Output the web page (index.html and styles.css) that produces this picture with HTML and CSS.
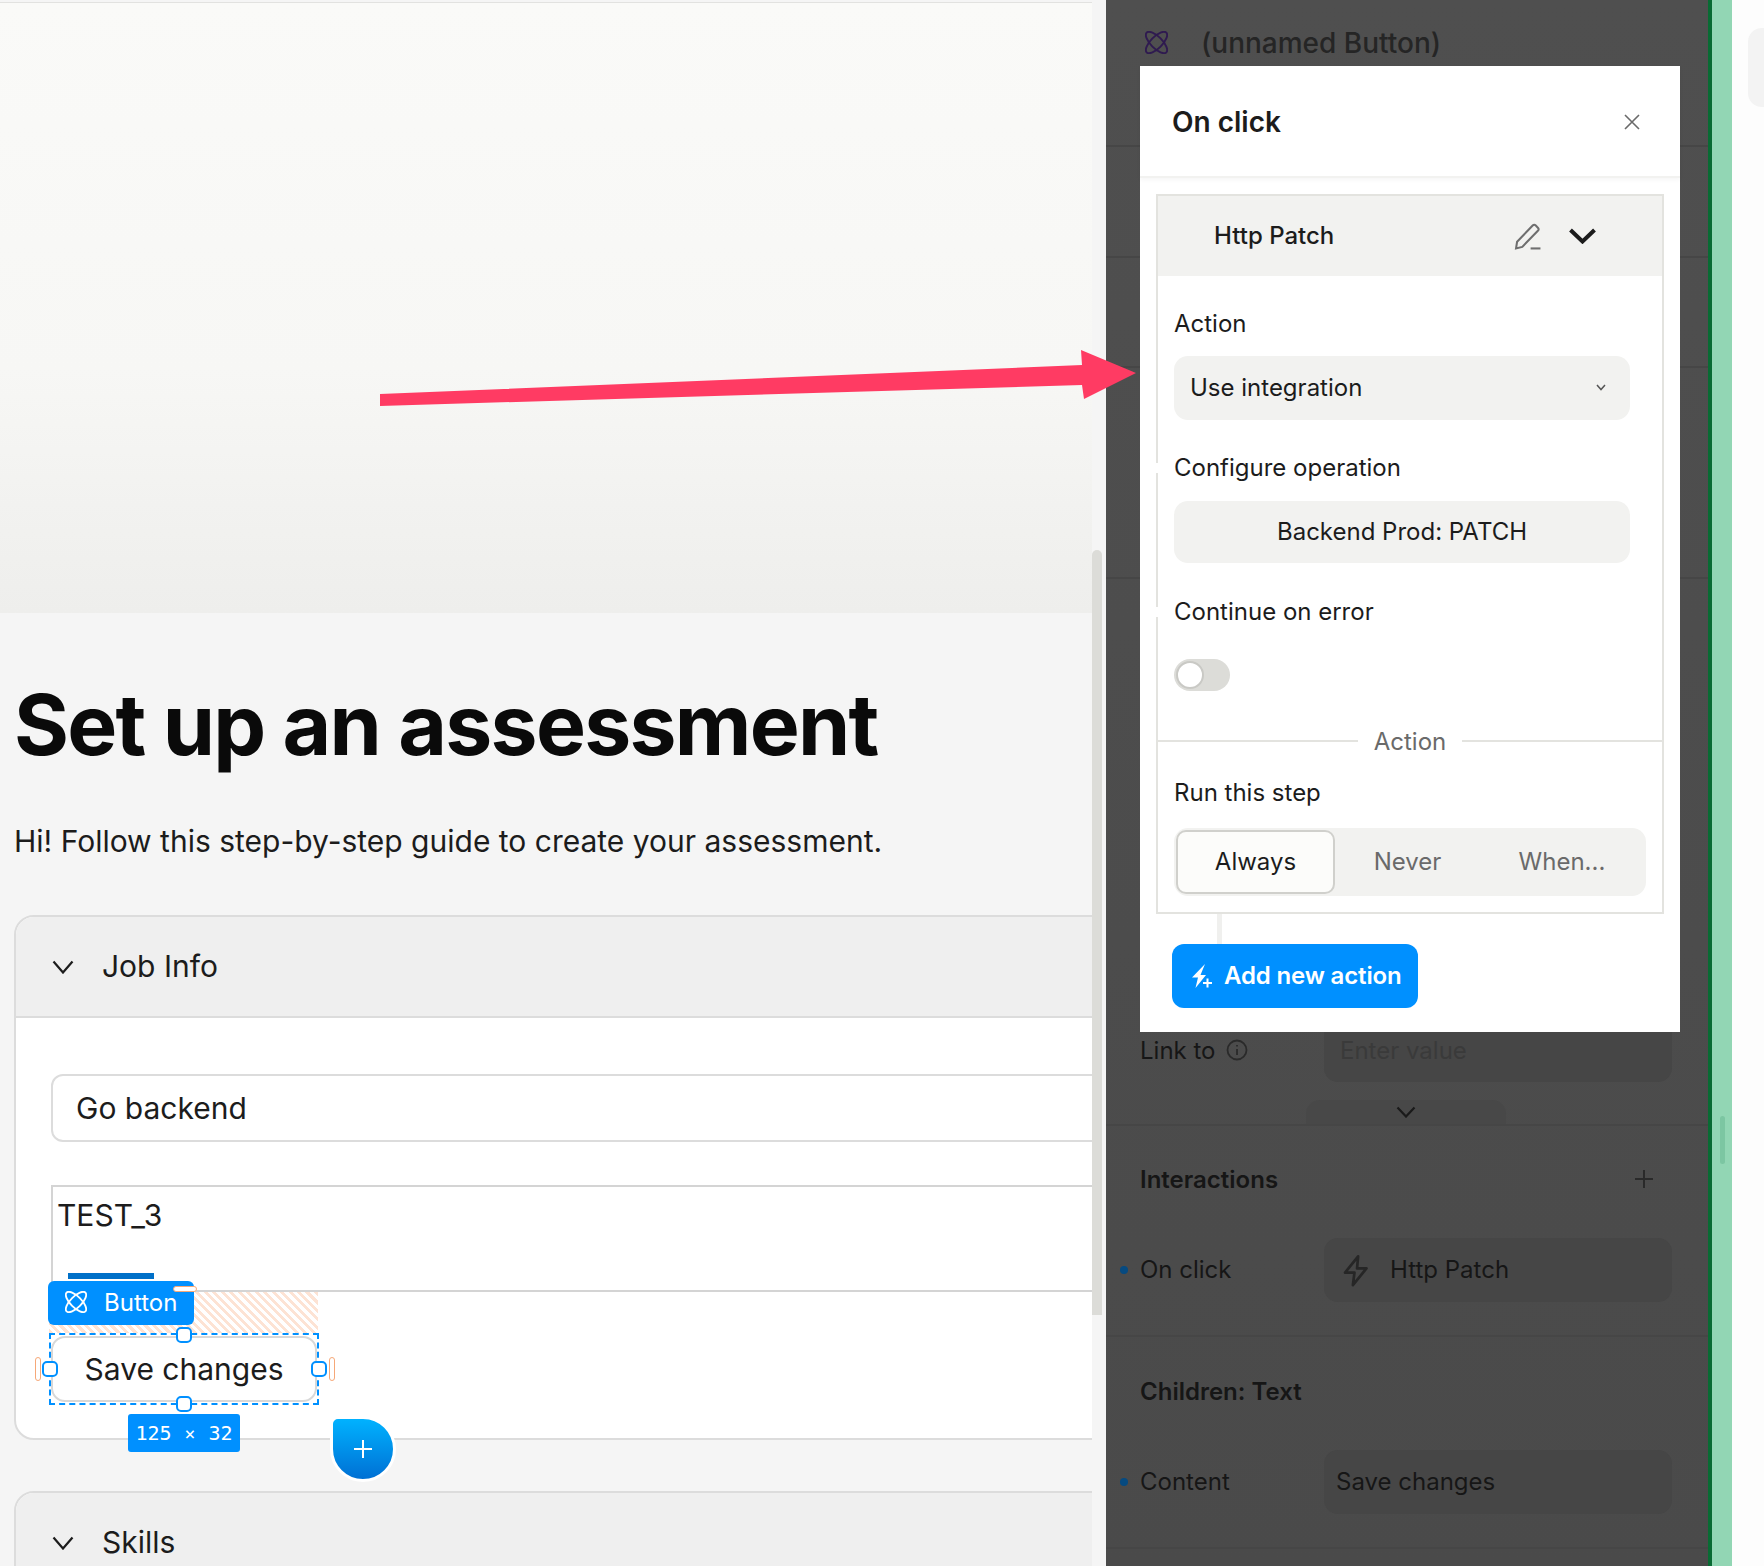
FILE: index.html
```html
<!DOCTYPE html>
<html lang="en">
<head>
<meta charset="utf-8">
<title>Set up an assessment</title>
<link rel="stylesheet" href="styles.css">
</head>
<body>
<div class="app">
  <main class="main">
    <div class="scroller">
      <div class="hero"></div>
      <h1 class="title">Set up an assessment</h1>
      <p class="subtitle">Hi! Follow this step-by-step guide to create your assessment.</p>

      <section class="card card-job">
        <header class="card-head">
          <svg class="chev" viewBox="0 0 22 14"><path d="M1.500 1.500 11 12.500 20.500 1.500"/></svg>
          <span>Job Info</span>
        </header>
        <div class="card-body">
          <div class="input">Go backend</div>
          <div class="textarea">TEST_3</div>
          <div class="selection">
            <div class="save-btn">Save changes</div>
            <div class="hatch"></div>
            <div class="blue-bar"></div>
            <div class="sel-label">
              <svg class="atom" viewBox="0 0 24 24"><ellipse cx="12" cy="12" rx="6" ry="14.500" transform="rotate(45 12 12)"/><ellipse cx="12" cy="12" rx="6" ry="14.500" transform="rotate(-45 12 12)"/></svg>
              <span>Button</span>
            </div>
            <div class="dashed"></div>
            <i class="pill pill-top"></i>
            <i class="pill pill-bottom"></i>
            <i class="pill pill-left"></i>
            <i class="pill pill-right"></i>
            <i class="handle h-top"></i>
            <i class="handle h-bottom"></i>
            <i class="handle h-left"></i>
            <i class="handle h-right"></i>
            <div class="size-tag"><span>125</span><span class="times">×</span><span>32</span></div>
            <div class="drop">
              <svg viewBox="0 0 20 20"><path d="M10 1v18M1 10h18"/></svg>
            </div>
          </div>
        </div>
      </section>

      <section class="card card-skills">
        <header class="card-head">
          <svg class="chev" viewBox="0 0 22 14"><path d="M1.500 1.500 11 12.500 20.500 1.500"/></svg>
          <span>Skills</span>
        </header>
      </section>
    </div>
    <div class="gutter"><div class="thumb"></div></div>
  </main>

  <aside class="panel">
    <div class="pane pane-name">
      <svg class="atom atom-dark" viewBox="0 0 24 24"><ellipse cx="12" cy="12" rx="6" ry="14.500" transform="rotate(45 12 12)"/><ellipse cx="12" cy="12" rx="6" ry="14.500" transform="rotate(-45 12 12)"/></svg>
      <span>(unnamed Button)</span>
    </div>
    <div class="pane pane-a"></div>
    <div class="pane pane-b"></div>
    <div class="pane pane-c"></div>
    <div class="pane pane-link">
      <div class="row">
        <span class="no-dot"></span>
        <span class="row-label">Link to
          <svg class="info" viewBox="0 0 22 22"><circle cx="11" cy="11" r="9.500"/><path d="M11 10v6M11 6v1.600"/></svg>
        </span>
        <div class="field placeholder">Enter value</div>
      </div>
      <div class="more-tab">
        <svg viewBox="0 0 20 12"><path d="M1.500 1.500 10 10.500 18.500 1.500"/></svg>
      </div>
    </div>
    <div class="pane pane-list pane-first">
      <div class="pane-title">
        <span>Interactions</span>
        <svg class="plus" viewBox="0 0 20 20"><path d="M10 1v18M1 10h18"/></svg>
      </div>
      <div class="row">
        <span class="dot"></span>
        <span class="row-label">On click</span>
        <div class="field field-icon">
          <svg class="bolt" viewBox="0 0 24 30"><path d="M14.500 1.500 2 17h9l-1.500 12L22.500 13h-9z"/></svg>
          <span>Http Patch</span>
        </div>
      </div>
    </div>
    <div class="pane pane-list">
      <div class="pane-title"><span>Children: Text</span></div>
      <div class="row">
        <span class="dot"></span>
        <span class="row-label">Content</span>
        <div class="field">Save changes</div>
      </div>
    </div>
    <div class="pane pane-end"></div>

    <div class="modal">
      <header class="modal-head">
        <h2>On click</h2>
        <svg class="close" viewBox="0 0 16 16"><path d="M1 1l14 14M15 1 1 15"/></svg>
      </header>
      <div class="step">
        <div class="step-head">
          <span class="step-name">Http Patch</span>
          <svg class="pen" viewBox="0 0 26 26"><path d="M1.500 24.500 2.500 18 17.500 2.500q1.500-1.500 3 0l2 2q1.500 1.500 0 3L7.500 23z"/><path d="M15.500 24.500H25"/></svg>
          <svg class="step-chev" viewBox="0 0 28 16"><path d="M2 2 14 13.500 26 2"/></svg>
        </div>
        <div class="step-body">
          <label class="lab lab-first">Action</label>
          <div class="select"><span>Use integration</span>
            <svg viewBox="0 0 10 7"><path d="M1 1l4 4.500L9 1"/></svg>
          </div>
          <label class="lab lab-notch lab-config">Configure operation</label>
          <div class="op-btn">Backend Prod: PATCH</div>
          <label class="lab lab-notch lab-continue">Continue on error</label>
          <div class="toggle"><i></i></div>
          <div class="divider"><span>Action</span></div>
          <label class="lab lab-run">Run this step</label>
          <div class="segment">
            <span class="seg seg-on">Always</span>
            <span class="seg seg-never">Never</span>
            <span class="seg seg-when">When...</span>
          </div>
        </div>
      </div>
      <div class="connector"></div>
      <div class="add-btn">
        <svg viewBox="0 0 20 24"><path class="add-bolt" d="M13 0 0 13.500h6L3.500 24 14 11H8.500z"/><path class="add-plus" d="M15.500 14.500v9M11 19h9"/></svg>
        <span>Add new action</span>
      </div>
    </div>
  </aside>

  <div class="green"><div class="green-thumb"></div></div>
  <div class="far"><div class="far-box"></div></div>
</div>

<svg class="arrow" viewBox="0 0 756 56"><path d="M0 44 702 15 701 0 756 23 704 49 702 35 0 56z"/></svg>
</body>
</html>
```
FILE: styles.css
```css
* { box-sizing: border-box; }
html, body { margin: 0; padding: 0; }
body {
  width: 1764px;
  height: 1566px;
  overflow: hidden;
  font-family: Inter, "Liberation Sans", sans-serif;
  color: #1c1c1c;
  background: #f5f5f5;
  position: relative;
}
.app { display: flex; width: 1764px; height: 1566px; }

/* left canvas */
.main { display: flex; width: 1106px; height: 1566px; flex: none; background: #f5f5f5; }
.scroller { width: 1092px; height: 1566px; overflow: hidden; flex: none; }
.gutter { width: 14px; padding: 550px 4px 0 0; flex: none; }
.thumb { width: 10px; height: 765px; background: #dcdcd8; border-radius: 5px 5px 0 0; }
.hero {
  margin-top: 2px;
  height: 611px;
  border-top: 1px solid #e2e2e0;
  background: linear-gradient(#fafaf8 0%, #f7f7f5 60%, #eeeeec 100%);
}
.title {
  margin: 62px 0 0 14px;
  font-size: 84px;
  line-height: 100px;
  font-weight: 700;
  letter-spacing: -1.750px;
  color: #0a0a0a;
  white-space: nowrap;
}
.subtitle {
  margin: 46px 0 0 14px;
  font-size: 30px;
  line-height: 40px;
  white-space: nowrap;
}
.card {
  width: 1200px;
  margin-left: 14px;
  border: 2px solid #dcdcdc;
  border-radius: 20px;
  background: #fff;
}
.card-job { margin-top: 54px; height: 525px; }
.card-skills { margin-top: 51px; }
.card-head {
  display: flex;
  align-items: center;
  height: 101px;
  padding: 0 0 2px 36px;
  background: #efefef;
  border-bottom: 2px solid #dcdcdc;
  border-radius: 18px 18px 0 0;
  font-size: 30px;
}
.chev { width: 22px; height: 14px; margin: 2px 28px 0 0; fill: none; stroke: #1c1c1c; stroke-width: 2.200; }
.card-body { padding: 56px 35px 0; }
.input {
  height: 68px;
  padding-left: 23px;
  border: 2px solid #dcdcdc;
  border-radius: 12px;
  font-size: 30px;
  line-height: 64px;
}
.textarea {
  height: 107px;
  margin-top: 43px;
  padding: 8px 0 0 4px;
  border: 2px solid #d4d4d4;
  font-size: 30px;
  line-height: 40px;
}

/* selected button, with its editor overlays */
.selection { position: relative; width: 266px; height: 66px; margin-top: 44px; }
.save-btn {
  height: 66px;
  border: 2px solid #d8d8d8;
  border-radius: 14px;
  background: #fff;
  font-size: 30px;
  line-height: 62px;
  text-align: center;
}
.hatch {
  position: absolute;
  left: -2px;
  top: -44px;
  width: 269px;
  height: 41px;
  background: repeating-linear-gradient(45deg, #fde3d4 0 3px, #fff 3px 6px);
}
.blue-bar { position: absolute; left: 17px; top: -63px; width: 86px; height: 6px; background: #0070c8; }
.sel-label {
  position: absolute;
  left: -3px;
  top: -55px;
  display: flex;
  align-items: center;
  width: 146px;
  height: 44px;
  padding: 0 0 2px 17px;
  border-radius: 6px;
  background: #0090ff;
  color: #fff;
  font-size: 24px;
}
.atom { width: 22px; height: 22px; margin-right: 17px; fill: none; stroke: #fff; stroke-width: 2; flex: none; }
.dashed { position: absolute; left: -2px; top: -3px; width: 270px; height: 72px; border: 2px dashed #0090ff; }
.pill { position: absolute; background: #fff; border: 1.500px solid #f6a878; border-radius: 3px; }
.pill-top { left: 122px; top: -50px; width: 24px; height: 6px; }
.pill-bottom { left: 122px; top: 78px; width: 24px; height: 6px; }
.pill-left { left: -16px; top: 21px; width: 6px; height: 24px; }
.pill-right { left: 278px; top: 21px; width: 6px; height: 24px; }
.handle {
  position: absolute;
  width: 16px;
  height: 16px;
  background: #fff;
  border: 2px solid #0090ff;
  border-radius: 5px;
}
.h-top { left: 125px; top: -9px; }
.h-bottom { left: 125px; top: 60px; }
.h-left { left: -9px; top: 25px; }
.h-right { left: 260px; top: 25px; }
.size-tag {
  position: absolute;
  left: 77px;
  top: 78px;
  display: flex;
  justify-content: center;
  align-items: center;
  gap: 13px;
  width: 112px;
  height: 38px;
  border-radius: 3px;
  background: #0090ff;
  color: #fff;
  font-family: "DejaVu Sans Mono", monospace;
  font-size: 20px;
}
.size-tag .times { font-size: 18px; }
.drop {
  position: absolute;
  left: 279px;
  top: 80px;
  display: flex;
  align-items: center;
  justify-content: center;
  width: 66px;
  height: 66px;
  border: 3px solid #fff;
  border-radius: 8px 50% 50% 50%;
  background: linear-gradient(#00b2ff, #0070d4);
}
.drop svg { width: 20px; height: 20px; fill: none; stroke: #fff; stroke-width: 2; }

/* right property panel, dimmed */
.panel {
  position: relative;
  width: 602px;
  height: 1566px;
  flex: none;
  background: linear-gradient(#4f4f4f, #4a4a4a);
  color: #161616;
}
.pane { border-bottom: 2px solid #464646; }
.pane-name {
  display: flex;
  align-items: center;
  height: 147px;
  padding: 26px 0 85px 39px;
  color: #252525;
  font-size: 28px;
  font-weight: 500;
}
.atom-dark { stroke: #2f1a50; margin: -2px 33px 0 0; width: 23px; height: 23px; }
.pane-a { height: 111px; }
.pane-b { height: 110px; }
.pane-c { height: 211px; }
.pane-link { height: 547px; display: flex; flex-direction: column; justify-content: flex-end; }
.pane-list { height: 212px; padding-top: 38px; }
.pane-first { height: 211px; padding-top: 37px; }
.pane-end { height: 30px; border-bottom: 0; }
.pane-title {
  display: flex;
  justify-content: space-between;
  align-items: center;
  height: 32px;
  padding: 0 54px 0 34px;
  font-size: 24px;
  font-weight: 600;
}
.plus { width: 20px; height: 20px; fill: none; stroke: #2a2a2a; stroke-width: 2; }
.row { display: flex; align-items: center; padding-left: 14px; }
.pane-list .row { margin-top: 43px; }
.pane-list .row-label { padding-bottom: 2px; }
.dot { width: 8px; height: 8px; border-radius: 50%; background: #064a80; flex: none; }
.no-dot { width: 8px; flex: none; }
.row-label { display: flex; align-items: center; gap: 10px; width: 184px; margin-left: 12px; font-size: 24px; flex: none; }
.info { width: 22px; height: 22px; fill: none; stroke: #2a2a2a; stroke-width: 1.800; }
.field {
  width: 348px;
  height: 64px;
  padding-left: 12px;
  border-radius: 14px;
  background: #464646;
  font-size: 24px;
  line-height: 64px;
}
.placeholder { padding-left: 16px; color: #3a3a3a; line-height: 66px; }
.field-icon { display: flex; align-items: center; padding-left: 19px; }
.bolt { width: 25px; height: 33px; margin-right: 22px; fill: none; stroke: #262626; stroke-width: 2.600; stroke-linejoin: round; }
.more-tab {
  display: flex;
  justify-content: center;
  align-items: center;
  width: 200px;
  height: 24px;
  margin: 18px 0 0 200px;
  border-radius: 14px 14px 0 0;
  background: #484848;
}
.more-tab svg { width: 20px; height: 12px; fill: none; stroke: #1a1a1a; stroke-width: 2.200; }

/* on click popover */
.modal {
  position: absolute;
  left: 34px;
  top: 66px;
  width: 540px;
  height: 966px;
  background: #fff;
  color: #1c1c1c;
}
.modal-head {
  display: flex;
  justify-content: space-between;
  align-items: center;
  height: 112px;
  padding: 2px 40px 0 32px;
  border-bottom: 2px solid #f2f2f0;
  box-shadow: 0 2px 4px rgba(0, 0, 0, .04);
}
.modal-head h2 { margin: 0; font-size: 28px; font-weight: 600; }
.close { width: 16px; height: 16px; fill: none; stroke: #6a6a6a; stroke-width: 1.600; }
.step { width: 508px; height: 720px; margin: 16px 0 0 16px; border: 2px solid #e3e3df; }
.step-head { display: flex; align-items: center; height: 80px; padding-left: 56px; background: #f2f2f0; }
.step-name { font-size: 24px; font-weight: 500; width: 300px; padding-bottom: 2px; }
.pen { width: 28px; height: 27px; margin-right: 26px; fill: none; stroke: #6e6e6e; stroke-width: 2; }
.step-chev { width: 29px; height: 16px; fill: none; stroke: #1c1c1c; stroke-width: 4; }
.step-body { padding: 0 16px; }
.lab { display: block; position: relative; height: 30px; margin: 32px 0 18px; font-size: 24px; line-height: 30px; }
.lab-first { margin: 33px 0 17px; }
.lab-config { margin-top: 33px; }
.lab-continue { margin: 34px 0 17px; }
.lab-notch::before { content: ""; position: absolute; left: -18px; top: 10px; width: 2px; height: 10px; background: #fff; }
.select {
  display: flex;
  justify-content: space-between;
  align-items: center;
  width: 456px;
  height: 64px;
  padding: 0 24px 2px 16px;
  border-radius: 14px;
  background: #f2f2f0;
  font-size: 24px;
}
.select svg { width: 10px; height: 7px; fill: none; stroke: #555; stroke-width: 1.500; }
.op-btn {
  width: 456px;
  height: 62px;
  border-radius: 14px;
  background: #f2f2f0;
  font-size: 24px;
  line-height: 62px;
  text-align: center;
}
.toggle {
  width: 56px;
  height: 32px;
  margin-top: 32px;
  padding: 2px;
  border-radius: 16px;
  background: #dcdcd8;
}
.toggle i { display: block; width: 28px; height: 28px; border-radius: 50%; background: #fff; border: 2px solid #c9c9c5; }
.divider {
  display: flex;
  align-items: center;
  gap: 16px;
  height: 30px;
  margin: 35px -16px 0;
  color: #6a6a6a;
  font-size: 24px;
}
.divider::before, .divider::after { content: ""; flex: 1; height: 2px; background: #e3e3df; }
.lab-run { margin-top: 22px; margin-bottom: 20px; }
.segment {
  display: flex;
  align-items: center;
  width: 472px;
  height: 68px;
  padding: 2px;
  border-radius: 14px;
  background: #f2f2f0;
  font-size: 24px;
  color: #6a6a6a;
}
.seg { text-align: center; }
.seg-on {
  width: 159px;
  height: 64px;
  border: 2px solid #d0d0cc;
  border-radius: 10px;
  background: #fcfcfa;
  color: #1c1c1c;
  line-height: 60px;
}
.seg-never { width: 145px; padding-bottom: 2px; }
.seg-when { width: 164px; padding-bottom: 2px; }
.connector { width: 5px; height: 30px; margin-left: 77px; background: #f0f0ee; }
.add-btn {
  display: flex;
  align-items: center;
  width: 246px;
  height: 64px;
  margin-left: 32px;
  padding: 0 0 2px 20px;
  border-radius: 12px;
  background: #0090ff;
  color: #fff;
  font-size: 24px;
  font-weight: 600;
  letter-spacing: -.15px;
}
.add-btn svg { width: 20px; height: 24px; margin: 2px 12px 0 0; flex: none; overflow: visible; }
.add-bolt { fill: #fff; }
.add-plus { fill: none; stroke: #fff; stroke-width: 2; }

/* right edge */
.green { width: 24px; flex: none; height: 1566px; border-left: 4px solid #086b33; background: #92d6b4; padding: 1116px 0 0 8px; }
.green-thumb { width: 5px; height: 48px; background: #7cc6a2; border-radius: 3px; }
.far { flex: 1; background: #fdfdfd; padding-top: 28px; }
.far-box { height: 79px; margin-left: 16px; border-radius: 14px 0 0 14px; background: #f3f3f3; }

/* annotation drawn over the screenshot */
.arrow { position: absolute; left: 380px; top: 350px; width: 756px; height: 56px; fill: #ff3b63; overflow: visible; }
```
